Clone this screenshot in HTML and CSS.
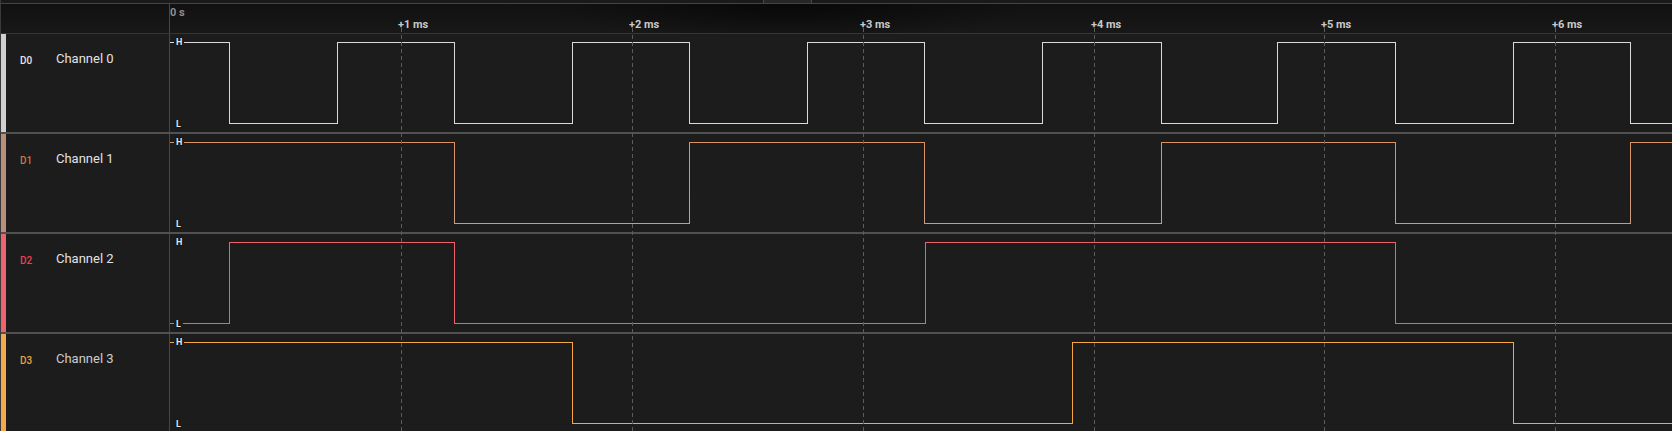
FILE: index.html
```html
<!DOCTYPE html>
<html lang="en">
<head>
<meta charset="utf-8">
<title>Logic analyzer</title>
<link rel="stylesheet" href="styles.css">
</head>
<body>
<div class="app">
  <div class="topbar"><div class="handle"></div></div>
  <div class="header">
    <div class="head-label"></div>
    <div class="axis">
      <span class="zero">0 s</span>
      <span class="tick" style="left:228px">+1 ms</span>
      <span class="tick" style="left:459px">+2 ms</span>
      <span class="tick" style="left:690px">+3 ms</span>
      <span class="tick" style="left:921px">+4 ms</span>
      <span class="tick" style="left:1151px">+5 ms</span>
      <span class="tick" style="left:1382px">+6 ms</span>
    </div>
  </div>

  <div class="rows">
    <div class="row ch0">
      <div class="label"><span class="tag">D0</span><span class="name">Channel 0</span></div>
      <div class="plot">
        <svg class="wave" width="1502" height="98" viewBox="0 0 1502 98">
          <polyline points="0,8.5 59.5,8.5 59.5,89.5 167.5,89.5 167.5,8.5 284.5,8.5 284.5,89.5 402.5,89.5 402.5,8.5 519.5,8.5 519.5,89.5 637.5,89.5 637.5,8.5 754.5,8.5 754.5,89.5 872.5,89.5 872.5,8.5 991.5,8.5 991.5,89.5 1107.5,89.5 1107.5,8.5 1225.5,8.5 1225.5,89.5 1343.5,89.5 1343.5,8.5 1460.5,8.5 1460.5,89.5 1502,89.5"/>
        </svg>
        <span class="lvl hi">H</span><span class="lvl lo">L</span>
      </div>
    </div>
    <div class="row ch1">
      <div class="label"><span class="tag">D1</span><span class="name">Channel 1</span></div>
      <div class="plot">
        <svg class="wave" width="1502" height="98" viewBox="0 0 1502 98">
          <defs>
            <linearGradient id="g1" x1="0" y1="8" x2="0" y2="90" gradientUnits="userSpaceOnUse">
              <stop offset="0" stop-color="#de9262"/>
              <stop offset="1" stop-color="#c79c86"/>
            </linearGradient>
          </defs>
          <polyline stroke="url(#g1)" points="0,8.5 284.5,8.5 284.5,89.5 519.5,89.5 519.5,8.5 754.5,8.5 754.5,89.5 991.5,89.5 991.5,8.5 1225.5,8.5 1225.5,89.5 1460.5,89.5 1460.5,8.5 1502,8.5"/>
        </svg>
        <span class="lvl hi">H</span><span class="lvl lo">L</span>
      </div>
    </div>
    <div class="row ch2">
      <div class="label"><span class="tag">D2</span><span class="name">Channel 2</span></div>
      <div class="plot">
        <svg class="wave" width="1502" height="98" viewBox="0 0 1502 98">
          <polyline points="0,89.5 59.5,89.5 59.5,8.5 284.5,8.5 284.5,89.5 755.5,89.5 755.5,8.5 1225.5,8.5 1225.5,89.5 1502,89.5"/>
        </svg>
        <span class="lvl hi">H</span><span class="lvl lo">L</span>
      </div>
    </div>
    <div class="row ch3">
      <div class="label"><span class="tag">D3</span><span class="name">Channel 3</span></div>
      <div class="plot">
        <svg class="wave" width="1502" height="98" viewBox="0 0 1502 98">
          <polyline points="0,8.5 402.5,8.5 402.5,89.5 902.5,89.5 902.5,8.5 1343.5,8.5 1343.5,89.5 1502,89.5"/>
        </svg>
        <span class="lvl hi">H</span><span class="lvl lo">L</span>
      </div>
    </div>
  </div>

  <svg class="grid" width="1672" height="431" viewBox="0 0 1672 431">
    <line x1="400.5" y1="28" x2="400.5" y2="431"/>
    <line x1="631.5" y1="28" x2="631.5" y2="431"/>
    <line x1="862.5" y1="28" x2="862.5" y2="431"/>
    <line x1="1093.5" y1="28" x2="1093.5" y2="431"/>
    <line x1="1323.5" y1="28" x2="1323.5" y2="431"/>
    <line x1="1554.5" y1="28" x2="1554.5" y2="431"/>
  </svg>
</div>
</body>
</html>
```

FILE: styles.css
```css
html, body {
  margin: 0;
  padding: 0;
  background: #1c1c1c;
  overflow: hidden;
}

body {
  font-family: Roboto, "Liberation Sans", Arial, sans-serif;
  color: #dedede;
}

.app {
  position: relative;
  width: 1672px;
  height: 431px;
  overflow: hidden;
  display: flex;
  flex-direction: column;
  box-sizing: border-box;
  border-left: 1px solid #3a3a3a;
}

.topbar {
  height: 3px;
  background: #1a1a1a;
  display: flex;
  flex-shrink: 0;
}

.handle {
  margin-left: 762px;
  width: 47px;
  height: 3px;
  background: #262626;
  border-left: 1px solid #4a4a4a;
  border-right: 1px solid #4a4a4a;
}

.header {
  height: 29px;
  flex-shrink: 0;
  display: flex;
  border-top: 1px solid #444;
  border-bottom: 1px solid #363636;
  background:
    radial-gradient(ellipse 240px 38px at 787px 0, rgba(0, 0, 0, 0.55), rgba(0, 0, 0, 0)),
    linear-gradient(#111111, #181818);
}

.head-label {
  width: 168px;
  flex-shrink: 0;
  border-right: 1px solid #474747;
}

.axis {
  position: relative;
  flex: 1;
}

.zero,
.tick {
  position: absolute;
  font-size: 11px;
  line-height: 13px;
  font-weight: 700;
  white-space: nowrap;
}

.zero {
  left: 0;
  top: 2px;
  color: #8e8e8e;
}

.tick {
  top: 14px;
  color: #c9c9c9;
}

.rows {
  display: flex;
  flex-direction: column;
  flex: 1;
}

.row {
  display: flex;
  height: 98px;
  flex-shrink: 0;
  border-bottom: 2px solid #515151;
}

.row:last-child {
  border-bottom: none;
}

.label {
  width: 169px;
  flex-shrink: 0;
  box-sizing: border-box;
  border-left: 5px solid #cfcfcf;
  border-right: 1px solid #474747;
  display: flex;
  align-items: flex-start;
  padding: 17px 0 0 14px;
}

.tag {
  width: 36px;
  flex-shrink: 0;
  margin-top: 4px;
  font-size: 10px;
  line-height: 12px;
  font-weight: 500;
}

.name {
  font-size: 13px;
  line-height: 15px;
  color: #e2e2e2;
  white-space: nowrap;
}

.plot {
  position: relative;
  flex: 1;
  height: 98px;
}

.wave {
  display: block;
  shape-rendering: crispEdges;
}

.wave polyline {
  fill: none;
  stroke-width: 1;
}

.lvl {
  position: absolute;
  left: 4px;
  padding: 0 2px;
  font-size: 9px;
  line-height: 10px;
  font-weight: 700;
  color: #e4e4e4;
  background: #1c1c1c;
  text-shadow: 0 0 2px #000;
}

.lvl.hi { top: 3px; }
.lvl.lo { top: 85px; }

/* channel colours */
.ch0 .label { border-left-color: #d0d0d0; }
.ch0 .tag { color: #e4e4e4; }
.ch0 polyline { stroke: #dadada; }

.ch1 .label { border-left-color: #b98f78; }
.ch1 .tag { color: #cc7843; }

.ch2 .label { border-left-color: #f0626f; }
.ch2 .tag { color: #ee3f50; }
.ch2 polyline { stroke: #f2606d; }

.ch3 .label { border-left-color: #f5a94c; }
.ch3 .tag { color: #e8a143; }
.ch3 .name { color: #cdcdcd; }
.ch3 polyline { stroke: #f6a645; }

.grid {
  position: absolute;
  left: 0;
  top: 0;
  pointer-events: none;
}

.grid line {
  stroke: #5c5c5c;
  stroke-width: 1;
  stroke-dasharray: 4 3;
  shape-rendering: crispEdges;
}
```
